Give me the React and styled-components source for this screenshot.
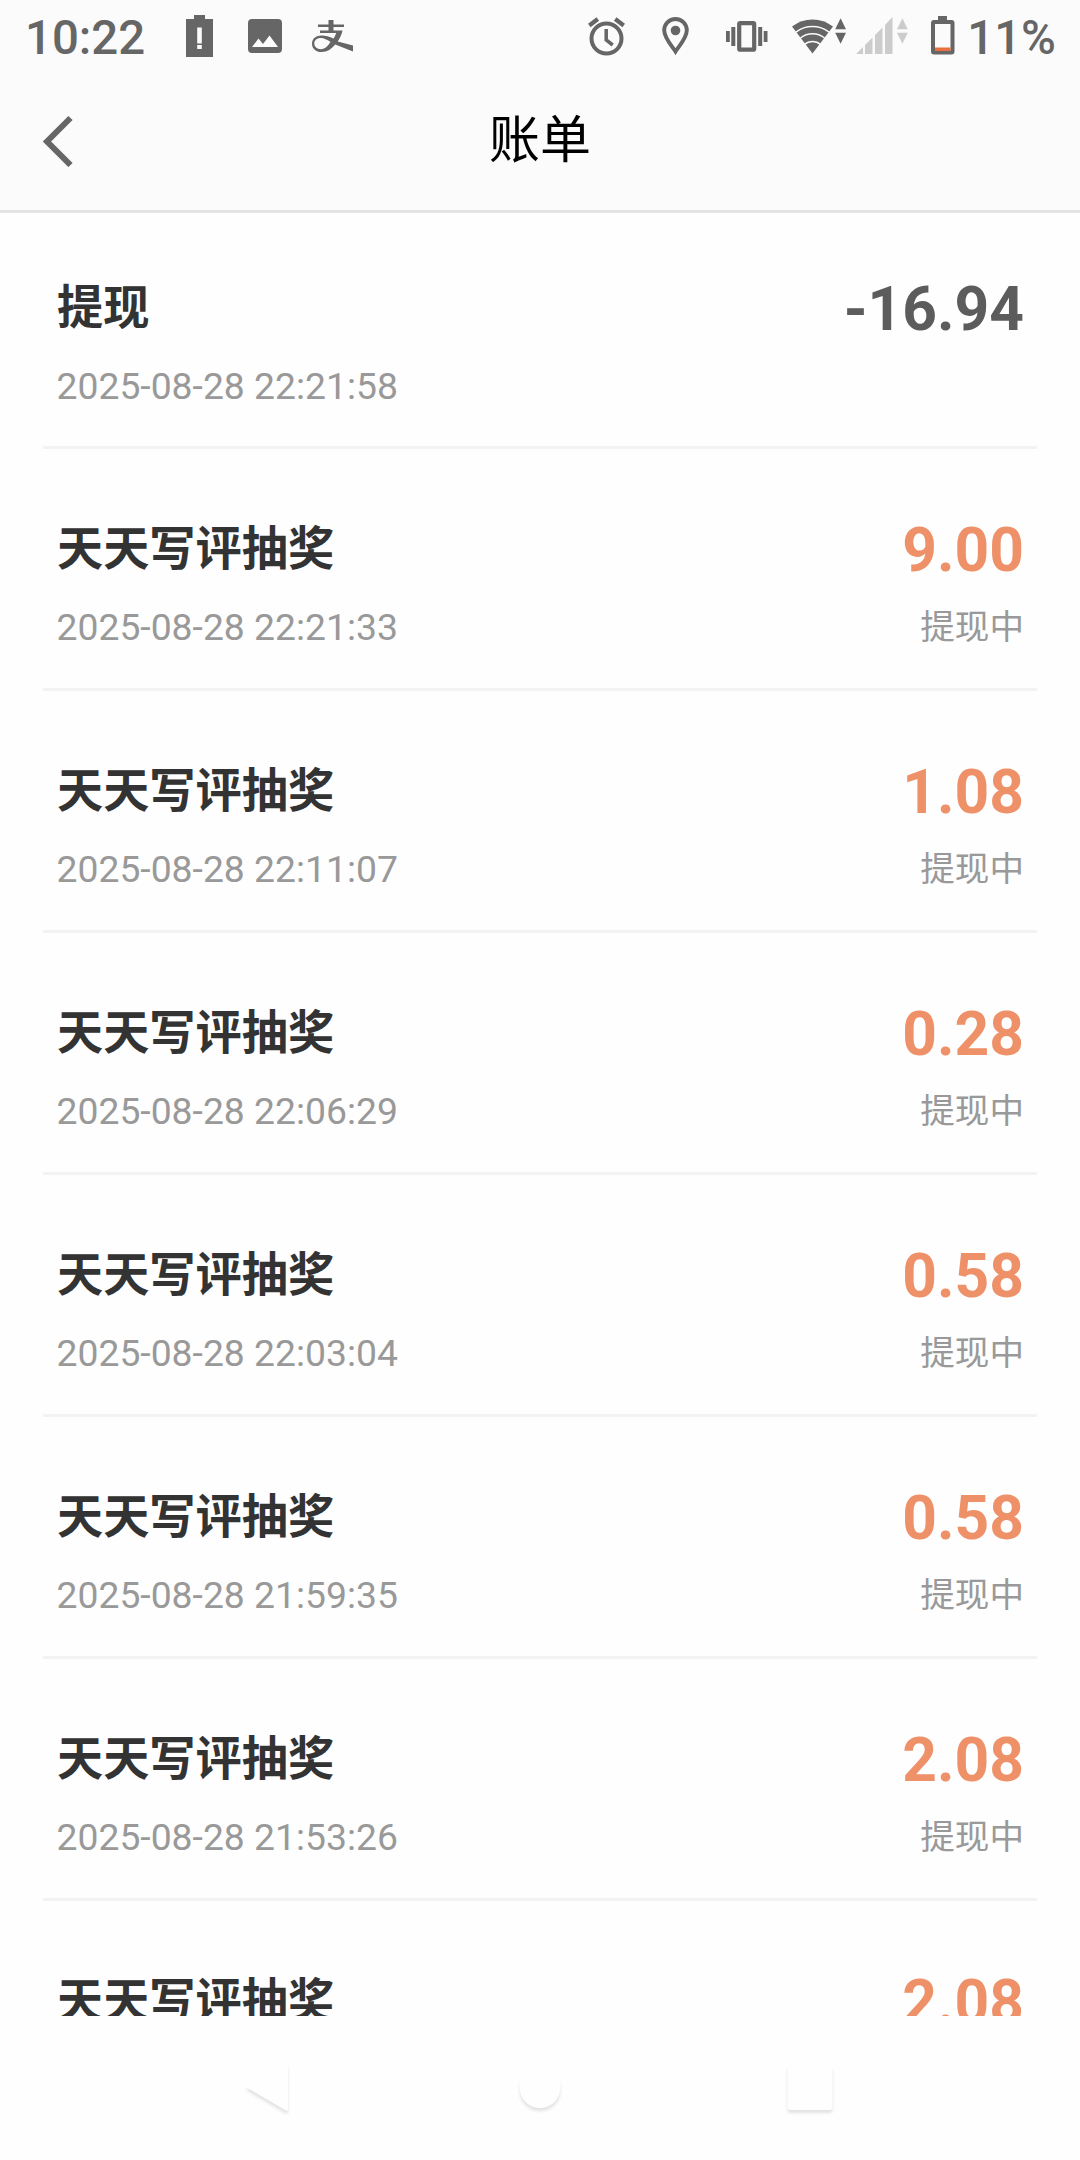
import React from 'react'
import styled, { createGlobalStyle } from 'styled-components'

const GlobalStyle = createGlobalStyle`
  * {
    box-sizing: border-box;
  }

  body {
    background-color: #fefefe;
    font-family: Roboto, 'Noto Sans CJK SC', sans-serif;
    margin: 0;
  }
`

const Screen = styled.div`
  display: flex;
  flex-direction: column;
  height: 2160px;
  overflow: hidden;
  width: 1080px;
`

const StatusBar = styled.div`
  background-color: #fbfbfb;
  color: #666;
  display: flex;
  flex: none;
  height: 72px;
  justify-content: space-between;
  padding: 0 24px 0 25px;
`

const StatusGroup = styled.div`
  align-items: center;
  display: flex;
`

const StatusText = styled.span`
  font-size: 47.4px;
  font-weight: 500;
  line-height: 72px;
  margin-left: ${props => props.$gap || 0}px;
  padding-top: 3px;
  white-space: nowrap;
`

const Glyph = styled.svg`
  color: ${props => props.$color || 'inherit'};
  display: block;
  flex: none;
  height: 72px;
  margin-left: ${props => props.$gap || 0}px;
`

const Header = styled.header`
  align-items: center;
  background-color: #fbfbfb;
  border-bottom: 3px solid #e3e3e3;
  display: grid;
  flex: none;
  grid-template-columns: 120px 1fr 120px;
  height: 141px;
`

const BackButton = styled.button`
  background: none;
  border: 0;
  color: #666;
  height: 138px;
  padding: 0 0 0 42px;
`

const Title = styled.h1`
  color: #000;
  font-size: 51px;
  font-weight: 400;
  line-height: 72px;
  margin: 0;
  text-align: center;
`

const List = styled.main`
  flex: 1;
  min-height: 0;
  overflow: hidden;
  padding: 0 43px;
`

const Row = styled.div`
  border-bottom: 3px solid #f3f3f3;
  display: flex;
  height: 242px;
  justify-content: space-between;
  padding: 65px 13px 0 14px;

  &:first-child {
    height: 236px;
    padding-top: 60px;
  }
`

const Column = styled.div`
  display: flex;
  flex-direction: column;
  text-align: ${props => props.$align || 'left'};
`

const Name = styled.div`
  color: #333;
  font-size: 46.2px;
  font-weight: 700;
  line-height: 70px;
`

const Time = styled.div`
  color: #999;
  font-size: 37.3px;
  line-height: 44px;
  margin: 21px 0 0 -0.5px;
`

const Amount = styled.div`
  color: ${props => (props.$out ? '#5c5c5c' : '#ee9168')};
  font-size: 60.5px;
  font-weight: 700;
  line-height: 70px;
  padding-top: 2px;
`

const State = styled.div`
  color: #999;
  font-size: 34.6px;
  font-weight: 400;
  line-height: 44px;
  margin-top: 19px;
`

const NavBar = styled.nav`
  align-items: center;
  display: flex;
  flex: none;
  height: 144px;
  justify-content: space-between;
  padding: 0 234px;
`

const NavIcon = styled.svg`
  display: block;
  fill: #fefefe;
  filter: drop-shadow(0 3px 1.5px rgba(0, 0, 0, 0.11));
  height: 72px;
  width: 72px;
`

const BatteryAlert = () => (
  <Glyph $gap={40.5} width='27' viewBox='0 0 27 72' fill='currentColor'>
    <path
      fillRule='evenodd'
      d='M8 15h11v4h8v38H0V19h8zM11.200 27.500v16h4.600v-16zM11.200 45v4h4.600v-4z'
    />
  </Glyph>
)

const Picture = () => (
  <Glyph $gap={35.5} width='34' viewBox='0 0 34 72' fill='currentColor'>
    <path
      fillRule='evenodd'
      d='M4 19h26a4 4 0 0 1 4 4v26a4 4 0 0 1-4 4H4a4 4 0 0 1-4-4V23a4 4 0 0 1 4-4zM4 47h26l-8.500-11.500-6.500 8.500-4.500-5.500z'
    />
  </Glyph>
)

const Alipay = () => (
  <Glyph $gap={30} width='42' viewBox='0 0 42 72' fill='currentColor'>
    <path d='M16.500 20h5v4.500H32V27H21.500v3.500h9c-.8 4-2.600 7.800-4.800 10.900L41 45.500V51.500L23.200 44.500C19.500 49 15.500 52 9.500 52 4 52 0 48.800 0 43.700s4-8.200 9.500-8.200c4 0 8 1.300 12 3 1.300-1.700 2-3.500 2.700-5.500H8v-2.500h8.500V27H6v-2.500h10.500zM18.500 42c-3.500-2.200-6.500-3.900-9.500-3.900-4 0-6.700 2.100-6.700 5.400s2.700 5.700 6.700 5.700c4 0 7-3.500 9.500-7.200z' />
  </Glyph>
)

const Alarm = () => (
  <Glyph width='37' viewBox='0 0 37 72' fill='none' stroke='currentColor'>
    <circle cx='18.500' cy='38.500' r='15' strokeWidth='4' />
    <path d='M18.200 29v11l6.500 5' strokeWidth='3.500' />
    <path d='M1.300 25.500l8.500-6.500M35.700 25.500L27.200 19' strokeWidth='4.200' />
  </Glyph>
)

const Pin = () => (
  <Glyph $gap={37} width='27' viewBox='0 0 27 72'>
    <path
      d='M13.500 19c6.500 0 11.300 5 11.300 11.200C24.800 38 17 46 13.500 51.500 10 46 2.200 38 2.200 30.200 2.200 24 7 19 13.500 19z'
      fill='none'
      stroke='currentColor'
      strokeWidth='3.900'
    />
    <circle cx='13.500' cy='30.500' r='4.800' fill='currentColor' />
  </Glyph>
)

const Vibrate = () => (
  <Glyph $gap={37} width='42' viewBox='0 0 42 72' fill='currentColor'>
    <path d='M0 31h3.800v11H0zM5.300 27h4v19h-4zM32.200 27h4v19h-4zM37.700 31h3.800v11h-3.800z' />
    <rect
      x='13.200'
      y='23.200'
      width='15'
      height='26.500'
      rx='1'
      fill='none'
      stroke='currentColor'
      strokeWidth='4.200'
    />
  </Glyph>
)

const Traffic = ({ x }) => (
  <path d={`M${x} 29.200l5.400-11 5.400 11zM${x} 32.800l5.400 11 5.400-11z`} />
)

const Wifi = () => (
  <Glyph $gap={24} width='55' viewBox='0 0 55 72' fill='currentColor'>
    <path d='M0 26.500a33.500 33.500 0 0 1 41 0L20.500 53.500z' />
    <g fill='none' stroke='#fbfbfb' strokeWidth='1.500'>
      <path d='M4 32.200a27 27 0 0 1 33 0' />
      <path d='M8.500 38a19.500 19.500 0 0 1 24 0' />
      <path d='M12.500 44.500a12 12 0 0 1 16 0' />
    </g>
    <Traffic x={43.200} />
  </Glyph>
)

const Signal = () => (
  <Glyph
    $color='#ccc'
    $gap={9}
    width='54'
    viewBox='0 0 54 72'
    fill='currentColor'
  >
    <path d='M0 54l7-7v7zM9 54v-9l7.500-7.500V54zM19 54V35l7.500-7.500V54zM29 54V25l7.500-8V54z' />
    <Traffic x={41} />
  </Glyph>
)

const Battery = () => (
  <Glyph $gap={21} width='24' viewBox='0 0 24 72'>
    <path d='M7 16h9v5H7z' fill='currentColor' />
    <rect
      x='2'
      y='22'
      width='19.500'
      height='30.500'
      rx='1'
      fill='none'
      stroke='currentColor'
      strokeWidth='4'
    />
    <path d='M4 47.500h15.500v3.500H4z' fill='#e8703f' />
  </Glyph>
)

const records = [
  { name: '提现', time: '2025-08-28 22:21:58', amount: '-16.94' },
  { name: '天天写评抽奖', time: '2025-08-28 22:21:33', amount: '9.00' },
  { name: '天天写评抽奖', time: '2025-08-28 22:11:07', amount: '1.08' },
  { name: '天天写评抽奖', time: '2025-08-28 22:06:29', amount: '0.28' },
  { name: '天天写评抽奖', time: '2025-08-28 22:03:04', amount: '0.58' },
  { name: '天天写评抽奖', time: '2025-08-28 21:59:35', amount: '0.58' },
  { name: '天天写评抽奖', time: '2025-08-28 21:53:26', amount: '2.08' },
  { name: '天天写评抽奖', amount: '2.08' }
]

const Record = ({ name, time, amount }) => {
  const out = amount.startsWith('-')

  return (
    <Row>
      <Column>
        <Name>{name}</Name>
        {time && <Time>{time}</Time>}
      </Column>
      <Column $align='right'>
        <Amount $out={out}>{amount}</Amount>
        {!out && time && <State>提现中</State>}
      </Column>
    </Row>
  )
}

const App = () => (
  <Screen>
    <GlobalStyle />
    <StatusBar>
      <StatusGroup>
        <StatusText>10:22</StatusText>
        <BatteryAlert />
        <Picture />
        <Alipay />
      </StatusGroup>
      <StatusGroup>
        <Alarm />
        <Pin />
        <Vibrate />
        <Wifi />
        <Signal />
        <Battery />
        <StatusText $gap={12}>11%</StatusText>
      </StatusGroup>
    </StatusBar>
    <Header>
      <BackButton aria-label='返回'>
        <svg width='32' height='52' viewBox='0 0 32 52' display='block'>
          <path
            d='M28.500 3L5 26.500l23.500 23.500'
            fill='none'
            stroke='currentColor'
            strokeWidth='6'
          />
        </svg>
      </BackButton>
      <Title>账单</Title>
    </Header>
    <List>
      {records.map((record, i) => (
        <Record key={i} {...record} />
      ))}
    </List>
    <NavBar>
      <NavIcon viewBox='0 0 72 72'>
        <path d='M12 35L51 13q3-1.500 3 2v41q0 4-3 2z' />
      </NavIcon>
      <NavIcon viewBox='0 0 72 72'>
        <circle cx='36' cy='35.500' r='20.500' />
      </NavIcon>
      <NavIcon viewBox='0 0 72 72'>
        <rect x='13.500' y='14' width='45' height='44' rx='3' />
      </NavIcon>
    </NavBar>
  </Screen>
)

export default App
